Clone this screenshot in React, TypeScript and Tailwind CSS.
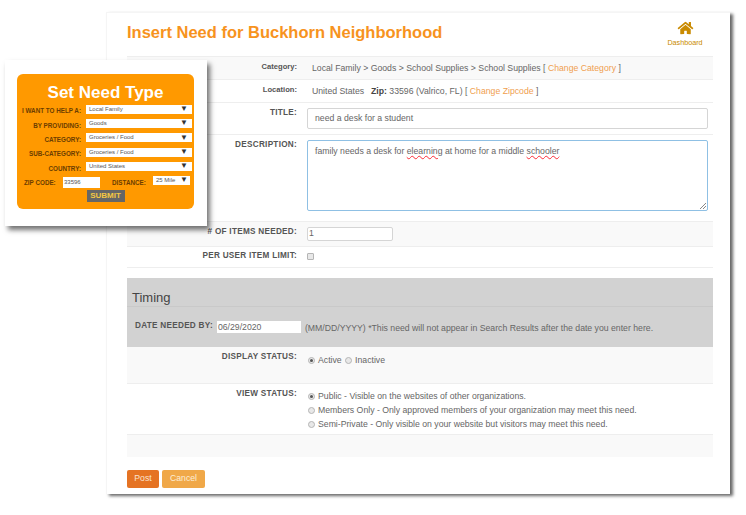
import React from "react";
import { FaHome } from "react-icons/fa";

const capsLabel = "text-[8.2px] leading-[10px] font-bold tracking-[0.27px] text-[#555]";
const smallLabel = "text-[7.6px] leading-[10px] font-bold text-[#555]";

const Row = ({
  label,
  className = "",
  labelClass = capsLabel,
  children,
}: {
  label: string;
  className?: string;
  labelClass?: string;
  children: React.ReactNode;
}) => (
  <div className={`flex border-b border-[#eeeeee] ${className}`}>
    <div className={`w-[170px] shrink-0 text-right ${labelClass}`}>{label}</div>
    <div className="ml-[10px] min-w-0 flex-1">{children}</div>
  </div>
);

const Radio = ({ checked = false }: { checked?: boolean }) => (
  <span className="mr-[3px] ml-[1px] inline-flex h-[7px] w-[7px] items-center justify-center rounded-full border border-[#b5b5b5] bg-[#e8e8e8] align-middle">
    {checked && <span className="h-[3px] w-[3px] rounded-full bg-[#555]" />}
  </span>
);

const NeedField = ({ label, value }: { label: string; value: string }) => (
  <div className="flex h-[14.3px] items-center">
    <div className="w-[64px] shrink-0 whitespace-nowrap pt-[4px] text-right text-[6.3px] font-bold text-[#6b3d00]">{label}</div>
    <div className="ml-[5px] flex h-[9px] w-[106px] items-center justify-between bg-white pl-[3px] pr-[4px] text-[6px] text-[#555]">
      <span>{value}</span>
      <span className="text-[8px] leading-none text-[#333]">▼</span>
    </div>
  </div>
);

const SetNeedType = () => (
  <div className="absolute left-[5px] top-[60px] h-[166px] w-[202px] bg-white shadow-[3px_4px_5px_rgba(0,0,0,0.55)]">
    <div className="ml-[12px] mt-[14px] h-[135px] w-[177px] rounded-[6px] bg-[#ff9900] pt-[7px]">
      <div className="h-[22px] text-center text-[17px] font-bold leading-[24px] text-white">Set Need Type</div>
      <div className="-mt-[1px]">
        <NeedField label="I WANT TO HELP A:" value="Local Family" />
        <NeedField label="BY PROVIDING:" value="Goods" />
        <NeedField label="CATEGORY:" value="Groceries / Food" />
        <NeedField label="SUB-CATEGORY:" value="Groceries / Food" />
        <NeedField label="COUNTRY:" value="United States" />
      </div>
      <div className="mt-[2px] flex h-[14px] items-center whitespace-nowrap text-[6.3px] font-bold text-[#6b3d00]">
        <span className="ml-[7px] w-[32px]">ZIP CODE:</span>
        <span className="ml-[7px] flex h-[11px] w-[37px] items-center bg-white pl-[1px] text-[6px] font-normal text-[#555]">33596</span>
        <span className="ml-[12px] w-[35px]">DISTANCE:</span>
        <span className="ml-[6px] -mt-[4px] flex h-[9px] w-[37px] items-center justify-between bg-white pl-[3px] pr-[2px] text-[6px] font-normal text-[#555]">
          25 Mile <span className="text-[8px] leading-none text-[#333]">▼</span>
        </span>
      </div>
      <div className="mt-[1px] flex justify-center">
        <div className="flex h-[12px] w-[38px] items-center justify-center bg-[#666666] text-[8px] font-bold text-[#f5c842]">SUBMIT</div>
      </div>
    </div>
  </div>
);

export default function App() {
  return (
    <div className="relative h-[515px] w-[746px] overflow-hidden bg-white font-['Liberation_Sans',Arial,sans-serif]">
      <div className="absolute left-[106px] top-[12px] h-[482px] w-[624px] border-l border-t border-[#f5f5f5] bg-white pl-[20px] pr-[17px] shadow-[3px_2px_3px_rgba(0,0,0,0.6)]">
        <div className="flex h-[44px] justify-between border-b border-[#eeeeee]">
          <h1 className="pt-[8px] text-[16.5px] font-bold leading-[22px] text-[#f7931e]">Insert Need for Buckhorn Neighborhood</h1>
          <div className="mr-[10px] flex w-[36px] flex-col items-center pt-[8px] text-[7.2px] leading-[10px] text-[#c98a00]">
            <FaHome className="h-[14px] w-[17px] text-[#c98a00]" />
            <span className="mt-[3px]">Dashboard</span>
          </div>
        </div>

        <Row label="Category:" className="h-[23px] bg-[#f9f9f9] pt-[5px]" labelClass={smallLabel}>
          <div className="ml-[5px] text-[8.7px] leading-[12px] text-[#666]">
            Local Family &gt; Goods &gt; School Supplies &gt; School Supplies [ <span className="text-[#f0a050]">Change Category</span> ]
          </div>
        </Row>
        <Row label="Location:" className="h-[23px] pt-[5px]" labelClass={smallLabel}>
          <div className="ml-[5px] text-[8.7px] leading-[12px] text-[#666]">
            United States &nbsp;<b className="ml-[2px] text-[#444]">Zip:</b> 33596 (Valrico, FL) [ <span className="text-[#f0a050]">Change Zipcode</span> ]
          </div>
        </Row>
        <Row label="TITLE:" className="h-[32px] bg-white pt-[5px]">
          <div className="flex h-[21px] w-[401px] items-center rounded-[2px] border border-[#d5d5d5] pl-[7px] text-[8.7px] text-[#666]">need a desk for a student</div>
        </Row>
        <Row label="DESCRIPTION:" className="h-[87px] pt-[5px]">
          <div className="relative h-[71px] w-[401px] rounded-[2px] border border-[#8fc0e4] pl-[7px] pt-[4px] text-[8.7px] leading-[13px] text-[#666]">
            family needs a desk for <span className="underline decoration-red-500 decoration-wavy decoration-1">elearning</span> at home for a middle <span className="underline decoration-red-500 decoration-wavy decoration-1">schooler</span>
            <svg className="absolute bottom-[1px] right-[1px] h-[7px] w-[7px]" viewBox="0 0 7 7">
              <path d="M1 7 7 1M4 7l3-3" stroke="#888" strokeWidth="1" />
            </svg>
          </div>
        </Row>
        <Row label="# OF ITEMS NEEDED:" className="h-[25px] bg-[#f9f9f9] pt-[5px]">
          <div className="flex h-[14px] w-[86px] items-center rounded-[2px] border border-[#d5d5d5] bg-white pl-[1px] text-[8.7px] text-[#666]">1</div>
        </Row>
        <Row label="PER USER ITEM LIMIT:" className="h-[21px] pt-[4px]">
          <div className="mt-[2px] h-[7px] w-[7px] rounded-[1px] border border-[#b5b5b5] bg-[#e8e8e8]" />
        </Row>
        <div className="h-[10px]" />

        <div className="h-[69px] bg-[#d2d2d2]">
          <div className="h-[29px] border-b border-[#c9c9c9] pl-[5px] pt-[12px] text-[13px] leading-[16px] text-[#444]">Timing</div>
          <div className="flex items-start pt-[15px] text-[8.7px] leading-[12px] text-[#666]">
            <span className={`ml-[8px] ${capsLabel} -mt-[1px]`}>DATE NEEDED BY:</span>
            <span className="ml-[4px] -mt-[1px] flex h-[12px] w-[84px] items-center bg-white pl-[1px] text-[8.7px] text-[#666]">06/29/2020</span>
            <span className="ml-[4px]">(MM/DD/YYYY) *This need will not appear in Search Results after the date you enter here.</span>
          </div>
        </div>

        <Row label="DISPLAY STATUS:" className="h-[37px] bg-[#f9f9f9] pt-[5px]">
          <div className="pt-[2px] text-[8.7px] leading-[12px] text-[#666]">
            <Radio checked />Active <Radio />Inactive
          </div>
        </Row>
        <Row label="VIEW STATUS:" className="h-[51px] pt-[5px]">
          <div className="pt-[1px] text-[8.7px] leading-[13.8px] text-[#666]">
            <div><Radio checked />Public - Visible on the websites of other organizations.</div>
            <div><Radio />Members Only - Only approved members of your organization may meet this need.</div>
            <div><Radio />Semi-Private - Only visible on your website but visitors may meet this need.</div>
          </div>
        </Row>
        <div className="h-[22px] bg-[#f9f9f9]" />

        <div className="mt-[13px] flex gap-[3px]">
          <div className="flex h-[18px] w-[32px] items-center justify-center rounded-[2px] bg-[#e57323] text-[8.7px] text-[#fbe3d0]">Post</div>
          <div className="flex h-[18px] w-[43px] items-center justify-center rounded-[2px] bg-[#f0a848] text-[8.7px] text-[#fdeed5]">Cancel</div>
        </div>
      </div>
      <SetNeedType />
    </div>
  );
}
